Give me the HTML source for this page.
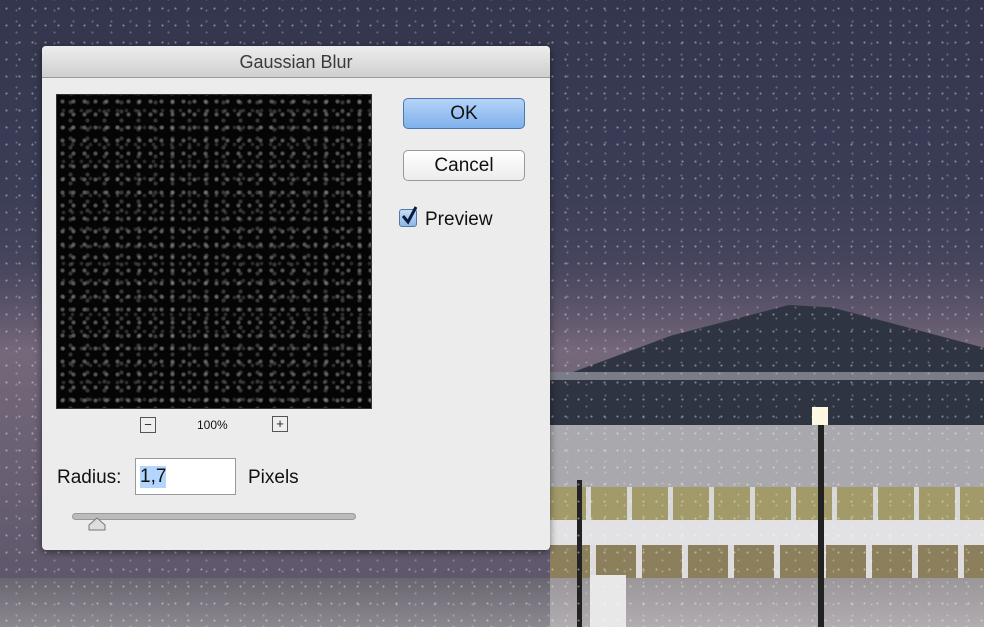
<!DOCTYPE html>
<html><head><meta charset="utf-8"><style>
*{margin:0;padding:0;box-sizing:border-box}
body{width:984px;height:627px;overflow:hidden;position:relative;font-family:"Liberation Sans",sans-serif;
background:linear-gradient(180deg,#34364e 0%,#3b3d56 30%,#45455d 42%,#5e566c 50%,#74687a 56%,#5a5468 100%);}
.snow{position:absolute;inset:0;
background-image:radial-gradient(circle,rgba(255,255,255,.4) 0.8px,transparent 1.3px),radial-gradient(circle,rgba(255,255,255,.25) 0.8px,transparent 1.3px);
background-size:13px 17px,19px 11px;background-position:0 0,7px 5px}
.dome{position:absolute;left:550px;top:305px;width:434px;height:122px;background:#2f3442;
clip-path:polygon(0 62%,28% 25%,55% 0,65% 2%,100% 35%,100% 100%,0 100%)}
.band1{position:absolute;left:550px;top:372px;width:434px;height:8px;background:#7a7d88}
.wall{position:absolute;left:550px;top:425px;width:434px;height:62px;background:#a9a9ad}
.win{position:absolute;left:550px;top:487px;width:434px;height:33px;background:repeating-linear-gradient(90deg,#a39a6a 0 36px,#d8d8d8 36px 41px)}
.white{position:absolute;left:550px;top:520px;width:434px;height:25px;background:#e2e2e4}
.low{position:absolute;left:550px;top:545px;width:434px;height:40px;background:repeating-linear-gradient(90deg,#8c7f5c 0 40px,#ddd 40px 46px)}
.ground{position:absolute;left:0;top:578px;width:984px;height:49px;background:linear-gradient(#6a6670,#8c8890)}
.ground2{position:absolute;left:550px;top:578px;width:434px;height:49px;background:linear-gradient(#9a969a,#b0acb0)}
.pole{position:absolute;background:#222}
.dlg{position:absolute;left:42px;top:46px;width:508px;height:504px;background:#ececec;border-radius:4px;box-shadow:0 2px 8px rgba(0,0,0,.5)}
.title{height:32px;border-radius:4px 4px 0 0;background:linear-gradient(#ededed,#cfcfcf);border-bottom:1px solid #999;text-align:center;font-size:18px;line-height:32px;color:#3a3a3a}
.prev{position:absolute;left:14px;top:48px;width:316px;height:315px;background:#050505;border:1px solid #333;
background-image:radial-gradient(circle,rgba(180,180,180,.45) 1.2px,transparent 2.8px),radial-gradient(circle,rgba(150,150,150,.35) 1.2px,transparent 2.8px),radial-gradient(circle,rgba(170,170,170,.25) 1px,transparent 2.5px);
background-size:11px 13px,17px 9px,9px 17px;background-position:0 0,5px 3px,2px 7px}
.btn{position:absolute;left:361px;width:122px;height:31px;border-radius:5px;text-align:center;font-size:19px;line-height:29px;color:#111}
.ok{top:52px;background:linear-gradient(#b5d4f7,#7fb0ec);border:1px solid #4d75b0}
.cancel{top:104px;background:linear-gradient(#fff,#ececec);border:1px solid #999}
.cb{position:absolute;left:357px;top:163px;width:18px;height:18px;border-radius:3px;background:linear-gradient(#c6dcf6,#8db6e8);border:1px solid #56779f}
.lbl{position:absolute;font-size:19px;color:#111}
.zb{position:absolute;width:16px;height:16px;border:1px solid #555;background:#eee;font-size:13px;line-height:13px;text-align:center;color:#222}
.inp{position:absolute;left:93px;top:412px;width:101px;height:37px;background:#fff;border:1px solid #999}
.track{position:absolute;left:30px;top:467px;width:284px;height:7px;border-radius:4px;background:#bbb;border:1px solid #999}
</style></head><body>
<div class="dome"></div><div class="band1"></div><div class="wall"></div><div class="win"></div><div class="white"></div><div class="low"></div><div class="ground"></div><div class="ground2"></div>
<div class="pole" style="left:818px;top:420px;width:6px;height:207px"></div>
<div style="position:absolute;left:812px;top:407px;width:16px;height:18px;background:#fff8e0"></div>
<div class="pole" style="left:577px;top:480px;width:5px;height:147px"></div>
<div style="position:absolute;left:590px;top:575px;width:36px;height:52px;background:#e8e8e8"></div>
<div class="snow"></div>
<div class="dlg">
<div class="title">Gaussian Blur</div>
<div class="prev"></div>
<div class="btn ok">OK</div>
<div class="btn cancel">Cancel</div>
<div class="cb"><svg width="20" height="22" style="position:absolute;left:0;top:-5px"><path d="M3 11 L8 17 L16 2" stroke="#0a1a40" stroke-width="3" fill="none"/></svg></div>
<div class="lbl" style="left:383px;top:163px">Preview</div>
<div class="zb" style="left:98px;top:371px">−</div>
<div class="lbl" style="left:155px;top:372px;font-size:12px">100%</div>
<div class="zb" style="left:230px;top:370px">+</div>
<div class="lbl" style="left:15px;top:421px">Radius:</div>
<div class="inp"><span style="position:absolute;left:4px;top:7px;font-size:19px;background:#b4d5fe;color:#111">1,7</span></div>
<div class="lbl" style="left:206px;top:421px">Pixels</div>
<div class="track"></div>
<svg style="position:absolute;left:45px;top:470px" width="20" height="16"><path d="M2 14 L2 9 L10 2 L18 9 L18 14 Z" fill="#ddd" stroke="#777"/></svg>
</div>
</body></html>
